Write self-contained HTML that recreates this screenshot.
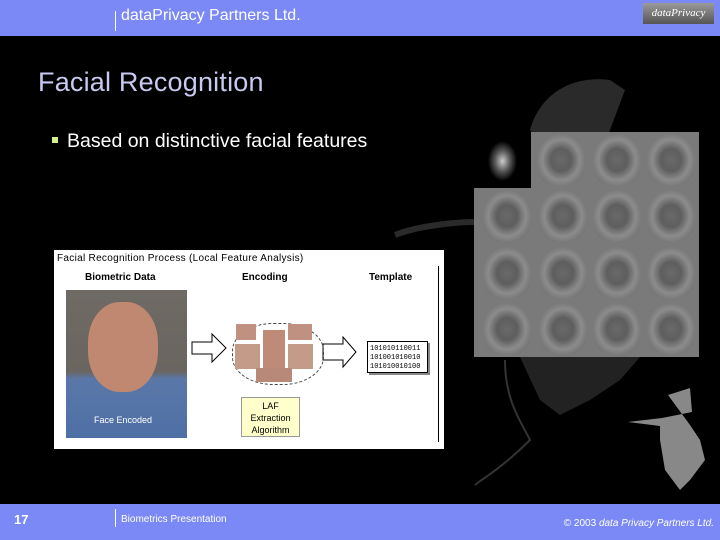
<!DOCTYPE html>
<html><head><style>
body{margin:0;width:720px;height:540px;overflow:hidden;background:#000;font-family:"Liberation Sans",sans-serif;position:relative}
.a{position:absolute}
.f{width:48px;height:52px;border-radius:45% 45% 40% 40%;background:radial-gradient(ellipse at 50% 50%,#6a6a6a 0,#5e5e5e 30%,#8c8c8c 55%,#767676 75%);position:absolute}
</style></head><body>
<div class="a" style="left:0;top:0;width:720px;height:36px;background:#7b89f6"></div>
<div class="a" style="left:115px;top:11px;width:1px;height:20px;background:#fff"></div>
<div class="a" style="left:121px;top:7px;color:#fff;font-size:16px">dataPrivacy Partners Ltd.</div>
<div class="a" style="left:643px;top:3px;width:71px;height:21px;background:linear-gradient(#9a9a9a,#555);color:#fff;font-size:11px;font-style:italic;font-family:'Liberation Serif',serif;text-align:center;line-height:21px">dataPrivacy</div>

<svg class="a" style="left:0;top:0" width="720" height="540">
<path d="M530 130 C540 95 570 75 610 80 L625 90 L610 130 L600 170 L560 175 Z" fill="#2a2a2a"/>
<path d="M395 235 C420 225 460 222 475 222" stroke="#2a2a2a" stroke-width="6" fill="none"/>
<path d="M520 357 L540 400 L560 415 L590 400 L620 380 L640 357 Z" fill="#222"/>
<path d="M505 360 C505 400 520 420 530 440 C500 470 480 480 475 485" stroke="#333" stroke-width="2" fill="none"/>
<path d="M668 395 L690 388 L692 412 L662 418 L628 422 L660 426 L660 440 L665 470 L680 490 L690 480 L705 460 L700 440 L690 425 Z" fill="#888"/>
</svg>

<div class="a" style="left:38px;top:67px;color:#c8c8f0;font-size:27px;letter-spacing:.2px">Facial Recognition</div>
<div class="a" style="left:52px;top:137px;width:6px;height:6px;background:#d4f08a"></div>
<div class="a" style="left:67px;top:130px;color:#fff;font-size:19.5px">Based on distinctive facial features</div>

<div class="a" style="left:474px;top:132px;width:57px;height:56px;background:radial-gradient(ellipse 30% 42% at 50% 52%,#ccc 0,#555 45%,#000 85%)"></div>
<div class="a" style="left:531px;top:132px;width:168px;height:56px;background:#7a7a7a"></div>
<div class="a" style="left:474px;top:188px;width:225px;height:169px;background:#7a7a7a"></div>
<div class="f" style="left:537px;top:134px"></div><div class="f" style="left:593px;top:134px"></div><div class="f" style="left:647px;top:134px"></div>
<div class="f" style="left:483px;top:190px"></div><div class="f" style="left:539px;top:190px"></div><div class="f" style="left:593px;top:190px"></div><div class="f" style="left:647px;top:190px"></div>
<div class="f" style="left:483px;top:247px"></div><div class="f" style="left:539px;top:247px"></div><div class="f" style="left:593px;top:247px"></div><div class="f" style="left:647px;top:247px"></div>
<div class="f" style="left:483px;top:303px"></div><div class="f" style="left:539px;top:303px"></div><div class="f" style="left:593px;top:303px"></div><div class="f" style="left:647px;top:303px"></div>

<div class="a" style="left:54px;top:250px;width:390px;height:199px;background:#fff"></div>
<div class="a" style="left:438px;top:266px;width:1px;height:176px;background:#000"></div>
<div class="a" style="left:57px;top:253px;font-size:10px;color:#000;letter-spacing:.3px">Facial Recognition Process (Local Feature Analysis)</div>
<div class="a" style="left:85px;top:272px;font-size:10px;font-weight:bold">Biometric Data</div>
<div class="a" style="left:242px;top:272px;font-size:10px;font-weight:bold">Encoding</div>
<div class="a" style="left:369px;top:272px;font-size:10px;font-weight:bold">Template</div>
<div class="a" style="left:66px;top:290px;width:121px;height:148px;background:linear-gradient(#6f6a64 0,#6a6560 55%,#5a77a8 60%,#4e6fa5 100%)"></div>
<div class="a" style="left:88px;top:302px;width:70px;height:90px;border-radius:45%;background:#c08870"></div>
<div class="a" style="left:94px;top:415px;font-size:9px;color:#fff">Face Encoded</div>
<svg class="a" style="left:190px;top:330px" width="40" height="40"><path d="M2 12 H22 V4 L36 18 L22 32 V24 H2 Z" fill="#fff" stroke="#000"/></svg>
<svg class="a" style="left:322px;top:336px" width="36" height="34"><path d="M1 8 H21 V1 L34 16 L21 31 V24 H1 Z" fill="#fff" stroke="#000"/></svg>
<div class="a" style="left:232px;top:323px;width:90px;height:60px;border:1px dashed #444;border-radius:45%"></div>
<div class="a" style="left:236px;top:324px;width:20px;height:16px;background:#c09080"></div>
<div class="a" style="left:288px;top:324px;width:24px;height:16px;background:#c09080"></div>
<div class="a" style="left:263px;top:330px;width:22px;height:40px;background:#c08a78"></div>
<div class="a" style="left:235px;top:344px;width:25px;height:25px;background:#c49a88"></div>
<div class="a" style="left:288px;top:344px;width:25px;height:25px;background:#c49a88"></div>
<div class="a" style="left:256px;top:368px;width:36px;height:14px;background:#b88878"></div>
<div class="a" style="left:241px;top:397px;width:59px;height:40px;background:#ffffcc;border:1px solid #999;font-size:9px;text-align:center;line-height:12px;padding-top:2px;box-sizing:border-box">LAF<br>Extraction<br>Algorithm</div>
<div class="a" style="left:367px;top:341px;width:61px;height:32px;background:#fff;border:1px solid #000;box-shadow:2px 2px 0 #888;font-family:'Liberation Mono',monospace;font-size:7px;line-height:9px;padding:3px 2px;box-sizing:border-box">101010110011<br>101001010010<br>101010010100</div>

<div class="a" style="left:0;top:504px;width:720px;height:36px;background:#7b89f6"></div>
<div class="a" style="left:14px;top:512px;color:#fff;font-size:13px;font-weight:bold">17</div>
<div class="a" style="left:115px;top:509px;width:1px;height:18px;background:#fff"></div>
<div class="a" style="left:121px;top:514px;color:#fff;font-size:10px">Biometrics Presentation</div>
<div class="a" style="right:6px;top:518px;color:#fff;font-size:10px">© 2003 <i>data Privacy Partners Ltd.</i></div>
</body></html>
